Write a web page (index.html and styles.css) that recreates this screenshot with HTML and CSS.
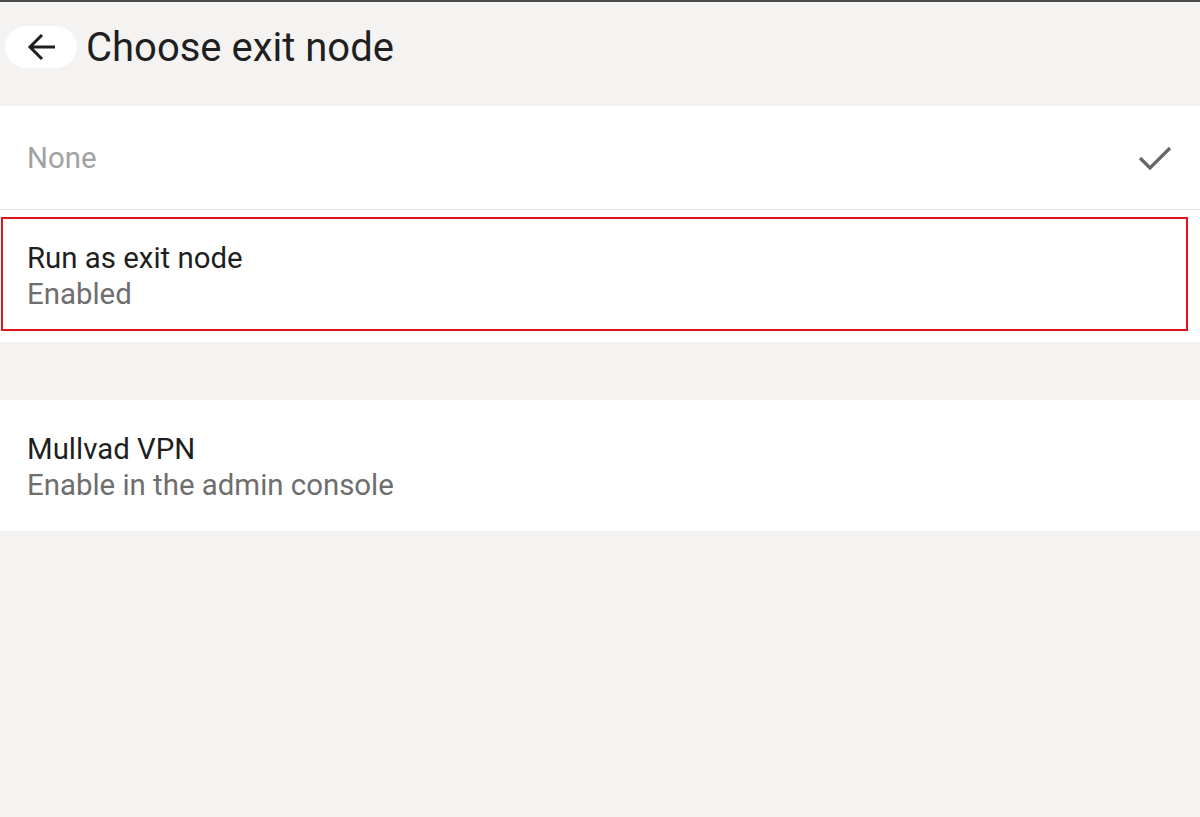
FILE: index.html
```html
<!DOCTYPE html>
<html lang="en">
<head>
<meta charset="utf-8">
<title>Choose exit node</title>
<link rel="stylesheet" href="styles.css">
</head>
<body>
<div class="screen">
  <header class="topbar">
    <button class="back" aria-label="Back">
      <svg width="30" height="30" viewBox="0 0 30 30" aria-hidden="true">
        <path d="M28 15H3M15 3L3 15l12 12" fill="none" stroke="#1f1f1f" stroke-width="3" stroke-linecap="butt" stroke-linejoin="miter"/>
      </svg>
    </button>
    <h1 class="title">Choose exit node</h1>
  </header>

  <section class="card">
    <div class="row row-none">
      <span class="label muted">None</span>
      <svg class="check" width="34" height="26" viewBox="0 0 34 26" aria-hidden="true">
        <path d="M2 13l10 10L32 3" fill="none" stroke="#666" stroke-width="3.2"/>
      </svg>
    </div>
    <div class="divider"></div>
    <div class="row row-run">
      <div class="highlight">
        <div class="label">Run as exit node</div>
        <div class="sub">Enabled</div>
      </div>
    </div>
  </section>

  <section class="card card-mullvad">
    <div class="row row-two">
      <div class="label">Mullvad VPN</div>
      <div class="sub">Enable in the admin console</div>
    </div>
  </section>
</div>
</body>
</html>
```

FILE: styles.css
```css
* { box-sizing: border-box; }

html, body {
  margin: 0;
  padding: 0;
  height: 100%;
}

body {
  background: #f4f3f2;
  font-family: Roboto, "Noto Sans", Arial, sans-serif;
  color: #1f1f1f;
}

.screen {
  border-top: 2px solid #4a4a4a;
  min-height: 100%;
}

.topbar {
  height: 104px;
  display: flex;
  align-items: flex-start;
  padding-top: 24px;
  padding-left: 5px;
}

.back {
  width: 72px;
  height: 42px;
  border: none;
  border-radius: 21px;
  background: #ffffff;
  display: flex;
  align-items: center;
  justify-content: flex-start;
  padding: 0 0 0 22px;
  margin: 0;
}

.back svg { display: block; }

.title {
  margin: -1px 0 0 9px;
  font-weight: 400;
  font-size: 40px;
  line-height: 46px;
  color: #1f1f1f;
  letter-spacing: 0;
}

.card {
  background: #ffffff;
}

.card-mullvad {
  margin-top: 58px;
}

.row-none {
  height: 103px;
  display: flex;
  align-items: center;
  justify-content: space-between;
  padding: 0 28px 0 27px;
}

.check { display: block; }

.divider {
  height: 1px;
  background: #e2e2e2;
}

.row-run {
  height: 132px;
  padding: 7px 12px 11px 1px;
}

.highlight {
  height: 114px;
  border: 2px solid #e5141b;
  padding: 21px 0 0 24px;
}

.label {
  font-size: 29.4px;
  line-height: 36px;
}

.muted { color: #a2a2a2; }

.sub {
  font-size: 29.4px;
  line-height: 36px;
  color: #6e6e6e;
}

.row-two {
  height: 131px;
  padding: 31px 0 0 27px;
}
```
